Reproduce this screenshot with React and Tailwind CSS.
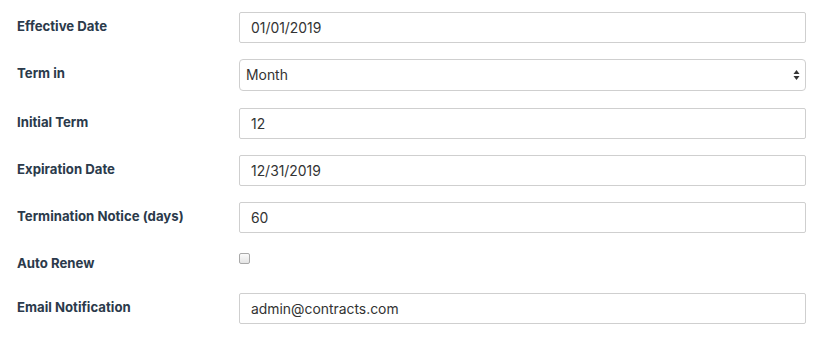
import { useState } from 'react';

const font = { fontFamily: 'Inter, "Open Sans", sans-serif' };

const fields = [
    { label: 'Effective Date', value: '01/01/2019', type: 'text' },
    { label: 'Term in', value: 'Month', type: 'select' },
    { label: 'Initial Term', value: '12', type: 'text' },
    { label: 'Expiration Date', value: '12/31/2019', type: 'text' },
    { label: 'Termination Notice (days)', value: '60', type: 'text' },
    { label: 'Auto Renew', value: false, type: 'checkbox' },
    { label: 'Email Notification', value: 'admin@contracts.com', type: 'text' },
];

const TextField = ({ value }) => (
    <input
        type="text"
        defaultValue={value}
        className="w-full h-[31px] border border-[#cfcfcf] rounded-[2px] bg-white px-[11px] text-[13.9px] text-[#333] outline-none"
    />
);

const SelectField = ({ value }) => (
    <div className="relative w-full">
        <select
            defaultValue={value}
            className="appearance-none w-full h-[32px] border border-[#cfcfcf] rounded-[4px] bg-white pl-[6px] pr-8 text-[13.9px] text-[#333] outline-none"
        >
            <option>Day</option>
            <option>Month</option>
            <option>Year</option>
        </select>
        <svg
            className="absolute right-[6px] top-1/2 -translate-y-1/2 pointer-events-none"
            width="7"
            height="11"
            viewBox="0 0 7 11"
        >
            <path d="M3.5 0.5 L6.5 4.5 L0.5 4.5 Z" fill="#333" />
            <path d="M3.5 10.5 L6.5 6.5 L0.5 6.5 Z" fill="#333" />
        </svg>
    </div>
);

const CheckboxField = () => {
    const [checked, setChecked] = useState(false);
    return (
        <div className="h-[28px] pt-[4px]">
            <button
                type="button"
                onClick={() => setChecked(!checked)}
                className="block w-[11px] h-[11px] rounded-[2px] border border-[#a9a9a9] bg-gradient-to-b from-[#fbfbfb] to-[#e4e4e4]"
            >
                {checked && <span className="block w-full h-full bg-blue-500 rounded-[1px]" />}
            </button>
        </div>
    );
};

const App = () => {
    return (
        <div className="min-h-screen bg-white pt-[12px] pl-[17px] pr-[32px]" style={font}>
            {fields.map((field) => (
                <div
                    key={field.label}
                    className={`flex items-start ${field.type === 'select' ? 'mb-[17px]' : 'mb-[16px]'}`}
                >
                    <label className="w-[222px] shrink-0 pt-[6px] text-[13.2px] font-bold text-[#2b3a4b] leading-[16px]">
                        {field.label}
                    </label>
                    <div className="flex-1">
                        {field.type === 'text' && <TextField value={field.value} />}
                        {field.type === 'select' && <SelectField value={field.value} />}
                        {field.type === 'checkbox' && <CheckboxField />}
                    </div>
                </div>
            ))}
        </div>
    );
};

export default App;
